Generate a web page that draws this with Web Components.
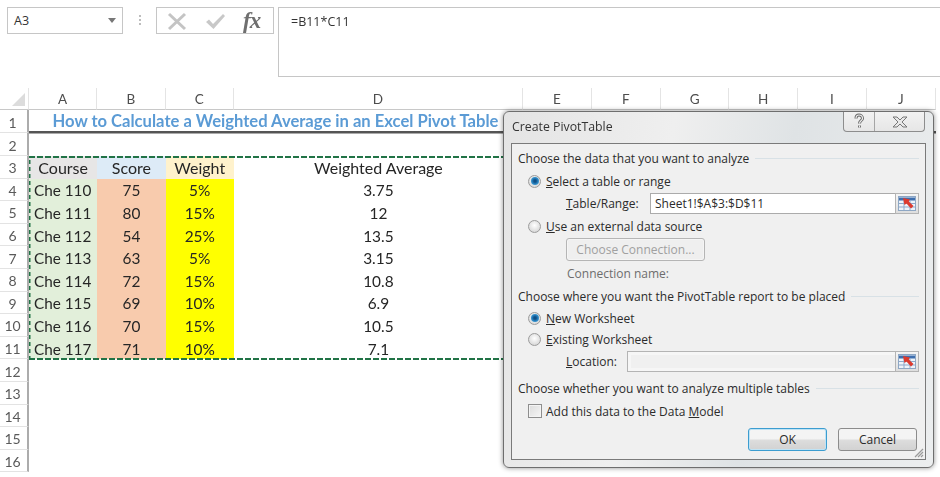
<!DOCTYPE html>
<html lang="en"><head><meta charset="utf-8"><title>Create PivotTable</title>
<style>
html,body{margin:0;padding:0;background:#fff}
body{width:940px;height:477px;overflow:hidden;position:relative;font-family:"Open Sans","Liberation Sans",sans-serif}
</style></head><body>
<xl-formula-bar></xl-formula-bar>
<xl-sheet></xl-sheet>
<xl-dialog heading="Create PivotTable">
  <xl-group-title>Choose the data that you want to analyze</xl-group-title>
  <xl-option checked><u>S</u>elect a table or range</xl-option>
  <xl-ref-field label-w="84"><span slot="label"><u>T</u>able/Range:</span>Sheet1!$A$3:$D$11</xl-ref-field>
  <xl-option><u>U</u>se an external data source</xl-option>
  <div style="padding-left:48px;display:flex;align-items:center"><xl-button disabled style="width:139px">Choose Connection...</xl-button></div>
  <div style="padding-left:49px;display:flex;align-items:center;color:#6d6d6d">Connection name:</div>
  <xl-group-title>Choose where you want the PivotTable report to be placed</xl-group-title>
  <xl-option checked><u>N</u>ew Worksheet</xl-option>
  <xl-option><u>E</u>xisting Worksheet</xl-option>
  <xl-ref-field disabled label-w="61"><span slot="label"><u>L</u>ocation:</span></xl-ref-field>
  <xl-group-title>Choose whether you want to analyze multiple tables</xl-group-title>
  <xl-check>Add this data to the Data <u>M</u>odel</xl-check>
  <div style="display:flex;justify-content:flex-end;align-items:flex-end;gap:11px;padding-right:8px">
    <xl-button default style="width:79px">OK</xl-button><xl-button style="width:79px">Cancel</xl-button>
  </div>
</xl-dialog>
<script>
const UI='"Open Sans","Liberation Sans",sans-serif';
const CELL='Lato,"Liberation Sans",sans-serif';
function def(name,css,html){
  customElements.define(name,class extends HTMLElement{
    connectedCallback(){
      if(this.shadowRoot)return;
      const r=this.attachShadow({mode:'open'});
      r.innerHTML='<style>'+css+'</style>'+(typeof html==='function'?html(this):html);
    }
  });
}
def('xl-formula-bar',`
:host{display:flex;height:88px;box-sizing:border-box;padding:7px 0 0 7px;align-items:flex-start;font:12.5px ${UI};color:#333;filter:blur(.3px)}
.box{border:1px solid #c6c6c6;box-sizing:border-box;height:27px;display:flex;align-items:center;background:#fff}
.name{width:116px;padding:0 6px 0 6px;justify-content:space-between}
.arrow{width:0;height:0;border:4px solid transparent;border-top:5px solid #777;border-bottom:0}
.dots{width:33px;display:flex;flex-direction:column;align-items:center;gap:2px;padding-top:8px;box-sizing:border-box;height:27px}
.dots i{width:2px;height:2px;background:#bdbdbd;display:block}
.fx{width:118px;gap:0;padding-left:9px}
.fx svg{display:block}
.fx b{font:italic bold 23px "Liberation Serif",serif;color:#6f6f6f;margin-left:17px;letter-spacing:-1px;line-height:27px}
.formula{margin-left:4px;flex:1;height:70px;align-items:flex-start;padding:5px 0 0 12px;border-right:0}
`,`<div class="box name"><span>A3</span><i class="arrow"></i></div>
<div class="dots"><i></i><i></i><i></i></div>
<div class="box fx">
<svg width="22" height="20" viewBox="0 0 22 20"><path d="M3 3 L19 18 M19 3 L3 18" stroke="#c4c4c4" stroke-width="3" fill="none"/></svg>
<svg style="margin-left:16px" width="22" height="20" viewBox="0 0 22 20"><path d="M2 11 L5 8.5 L9 13 L19 3 L21 5 L9.5 18 Z" fill="#c8c8c8"/></svg>
<b>fx</b></div>
<div class="box formula">=B11*C11</div>`);

def('xl-sheet',`
:host{display:grid;position:relative;grid-template-columns:29px 68.3px 68.3px 68.3px 289px 69px 69px 68.5px 68.5px 69px 69px;
grid-template-rows:22px 23px 23px repeat(9,22.6px) repeat(5,22.6px);font:16px ${CELL};color:#262626;width:940px;height:389px;overflow:hidden;filter:blur(.3px)}
.hc{display:flex;align-items:center;justify-content:center;color:#4d4d4d;font-size:13.5px;border-bottom:1px solid #c8c8c8;border-right:1px solid #e4e4e4;box-sizing:border-box;padding-top:1px}
.corner{border-right:1px solid #e4e4e4;border-bottom:1px solid #c8c8c8;box-sizing:border-box;overflow:hidden}
.corner svg{display:block;margin:5px 0 0 12px}
.rh{display:flex;align-items:center;justify-content:center;color:#5a5a5a;font-size:14px;border-right:2px solid #acacac;border-bottom:1px solid #e3e3e3;box-sizing:border-box;padding:2px 2px 0 0}
.c{display:flex;align-items:center;justify-content:center;min-width:0;white-space:nowrap;padding-top:1px;box-sizing:border-box}
.n{font-size:15.4px}
.l{justify-content:flex-start;padding-left:5px;background:#e2efda;font-size:15.3px}
.title{grid-column:2/span 4;font-weight:700;color:#5b9bd5;font-size:16.6px;border-bottom:2px solid #555;box-shadow:0 1px 0 #aaa;padding-right:1px}
.ul{grid-column:span 6;border-bottom:2px solid #555;box-shadow:0 1px 0 #aaa;box-sizing:border-box}
.g{background:#e7e6e6}.bl{background:#ddebf7}.or{background:#fff2cc}.sc{background:#f8cbad}.y{background:#ff0}
.full{grid-column:2/-1}
.ants{position:absolute;inset:0 0 -1px 0;grid-column:2/6;grid-row:4/13;pointer-events:none;
background:
repeating-linear-gradient(90deg,#217346 0 6px,transparent 6px 8px) top left/100% 2px no-repeat,
repeating-linear-gradient(90deg,#217346 0 6px,transparent 6px 8px) bottom left/100% 2px no-repeat,
repeating-linear-gradient(0deg,#217346 0 4px,transparent 4px 7px) top left/1.5px 100% no-repeat}
`,()=>{
  const cols='ABCDEFGHIJ'.split('');
  let h='<div class="corner"><svg width="14" height="14"><path d="M13 0V13H0Z" fill="#dcdcdc"/></svg></div>';
  h+=cols.map(c=>`<div class="hc">${c}</div>`).join('');
  const data=[[110,75,'5%','3.75'],[111,80,'15%','12'],[112,54,'25%','13.5'],[113,63,'5%','3.15'],[114,72,'15%','10.8'],[115,69,'10%','6.9'],[116,70,'15%','10.5'],[117,71,'10%','7.1']];
  h+='<div class="rh">1</div><div class="c title">How to Calculate a Weighted Average in an Excel Pivot Table</div><div class="ul"></div>';
  h+='<div class="rh">2</div><div class="full"></div>';
  h+='<div class="rh">3</div><div class="c g">Course</div><div class="c bl">Score</div><div class="c or">Weight</div><div class="c">Weighted Average</div><div style="grid-column:6/-1"></div>';
  data.forEach((d,i)=>{h+=`<div class="rh">${i+4}</div><div class="c l">Che ${d[0]}</div><div class="c sc n">${d[1]}</div><div class="c y n">${d[2]}</div><div class="c n">${d[3]}</div><div style="grid-column:6/-1"></div>`});
  for(let i=12;i<=16;i++)h+=`<div class="rh">${i}</div><div class="full"></div>`;
  h+='<div class="ants"></div>';
  return h;
});

def('xl-dialog',`
:host{position:absolute;left:503px;top:111px;width:431px;height:357px;box-sizing:border-box;z-index:5;
border:1px solid #6e6e6e;border-radius:6px;box-shadow:0 0 5px rgba(0,0,0,.45);
background:linear-gradient(100deg,#e4e4e4,#efefef 35%,#dfe3e5 60%,#eceeef);
font:12px ${UI};color:#2b2b2b;display:flex;flex-direction:column;padding:0 7px 7px 7px;filter:blur(.25px)}
.top{height:31px;flex:none;display:flex;justify-content:space-between;align-items:flex-start}
.t{font-size:12.3px;padding:6px 0 0 1px;color:#333}
.ctl{display:flex;margin-right:1px;height:20px;box-sizing:border-box;border:1px solid #8d8d8d;border-top:0;border-radius:0 0 4px 4px;background:linear-gradient(#f2f2f2,#e6e6e6)}
.ctl span{display:flex;align-items:center;justify-content:center;height:100%}
.ctl span:first-child{width:30px;border-right:1px solid #a5a5a5}
.ctl span:last-child{width:49px}
.panel{flex:1;background:#f0f0f0;border:1px solid #7a7a7a;box-sizing:border-box;padding:3px 0 0 6px;display:grid;position:relative;
grid-template-rows:22px 24px 21px 24px 23px 24px 22px 22px 20px 25px 28px 18px 31px;white-space:nowrap}
.grip{position:absolute;right:1px;bottom:1px}
`,h=>`<div class="top"><span class="t">${h.getAttribute('heading')}</span>
<div class="ctl"><span><svg width="12" height="17" viewBox="0 0 12 17"><g fill="none"><path d="M3 5.500C3 3 4.500 2 6 2S9.500 3 9.500 5.500C9.500 7.500 6.500 7.500 6.500 10.500M6.500 12.500v2" stroke="#666" stroke-width="3"/><path d="M3 5.500C3 3 4.500 2 6 2S9.500 3 9.500 5.500C9.500 7.500 6.500 7.500 6.500 10.500M6.500 12.500v2" stroke="#eee" stroke-width="1.200"/></g></svg></span>
<span><svg width="18" height="12" viewBox="0 0 18 12"><path d="M2 1H6L9 4 12 1H16L11 6 16 11H12L9 8 6 11H2L7 6Z" fill="#e8e8e8" stroke="#777"/></svg></span></div></div>
<div class="panel"><slot></slot>
<svg class="grip" width="10" height="10" viewBox="0 0 10 10"><path d="M9 1 1 9M9 4 4 9M9 7 7 9" stroke="#9a9a9a" stroke-width="1.200"/></svg></div>`);

def('xl-group-title',`:host{display:flex;align-items:center;gap:6px;padding-right:6px}
i{flex:1;height:1px;background:#d8e1e6}`,`<slot></slot><i></i>`);

def('xl-option',`:host{display:flex;align-items:center;padding-left:10px;gap:5px}
.r{width:13px;height:13px;border-radius:50%;box-sizing:border-box;border:1px solid #9c9c9c;background:radial-gradient(circle at 50% 40%,#fff,#dcdcdc 70%,#c8c8c8);flex:none;display:flex;align-items:center;justify-content:center}
.d{width:8px;height:8px;border-radius:50%;background:radial-gradient(circle at 50% 50%,#0f4f86 20%,#2a86c4 55%,#5fb6e4)}`,
h=>`<span class="r">${h.hasAttribute('checked')?'<span class="d"></span>':''}</span><span><slot></slot></span>`);

def('xl-check',`:host{display:flex;align-items:center;padding-left:10px;gap:4px}
.b{width:14px;height:14px;box-sizing:border-box;border:1px solid #8e8e8e;background:linear-gradient(135deg,#dcdcdc,#f6f6f6);box-shadow:inset 0 0 0 1px #f4f4f4;flex:none}`,
`<span class="b"></span><span><slot></slot></span>`);

def('xl-ref-field',`:host{display:flex;align-items:center;padding-left:48px;padding-right:6px}
.lab{flex:none}
.f{flex:1;height:21px;box-sizing:border-box;border:1px solid #ababab;background:#fff;display:flex;align-items:center;padding-left:4px;min-width:0}
.f.dis{background:#f0f0f0;border-color:#b4b4b4;box-shadow:inset 0 0 0 3px #f6f6f6}
.v{flex:1}
.p{width:24px;height:21px;margin:-1px -1px -1px 0;box-sizing:border-box;border:1px solid #b4b4b4;background:linear-gradient(#f5f5f5,#dedede);display:flex;align-items:center;justify-content:center;flex:none}`,
h=>`<span class="lab" style="width:${h.getAttribute('label-w')}px"><slot name="label"></slot></span>
<div class="f ${h.hasAttribute('disabled')?'dis':''}"><span class="v"><slot></slot></span>
<span class="p"><svg width="18" height="15" viewBox="0 0 18 15"><rect x=".5" y=".5" width="17" height="14" fill="#eef3f9" stroke="#8ea7c4"/><path d="M1 3H17" stroke="#3f6fae" stroke-width="3"/><path d="M1 7.500H17M1 11H17M6 5V14M12 5V14" stroke="#8fa9ca"/><path d="M5 2 12 3.500 10.800 5.500 15.500 10 13 12.500 8.500 7.500 6.500 9Z" fill="#dc3a2e"/></svg></span></div>`);

def('xl-button',`:host{display:inline-flex;align-items:center;justify-content:center;height:23px;box-sizing:border-box;border:1px solid #8c8c8c;border-radius:3px;background:linear-gradient(#f4f4f4 45%,#dcdcdc 55%,#d2d2d2);color:#2b2b2b;font-size:12px}
:host([disabled]){background:#efefef;border-color:#b5b5b5;color:#a0a0a0;box-shadow:inset 0 0 0 1px #f5f5f5}
:host([default]){border:1.5px solid #3c9dd0;box-shadow:inset 0 0 0 1px #bfe3f5}`,`<slot></slot>`);
</script>
</body></html>
